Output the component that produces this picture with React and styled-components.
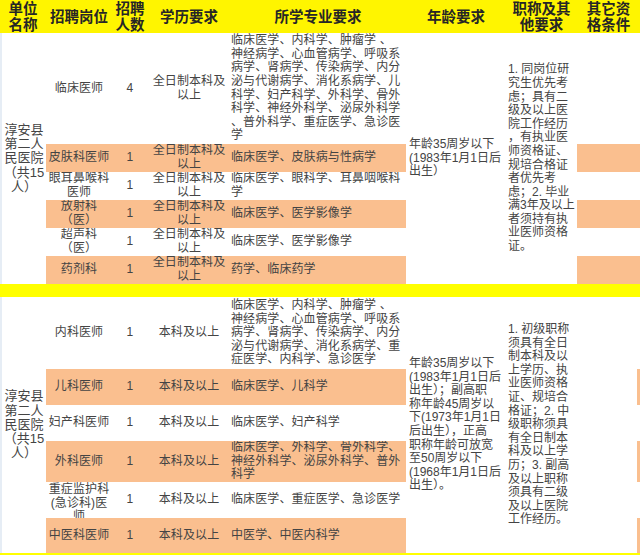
import React from 'react';
import styled, { createGlobalStyle } from 'styled-components';

const COLUMNS = '46px 66px 36px 82px 176px 100px 71px 63px';
const ORANGE = '#fabf8f';
const YELLOW = '#ffff00';

const GlobalStyle = createGlobalStyle`
    body {
        margin: 0;
        background: #ffffff;
    }
`;

const Sheet = styled.div`
    width: 640px;
    display: flex;
    flex-direction: column;
    font-family: "Liberation Sans", "Noto Sans CJK SC", sans-serif;
    color: #444444;
`;

const HeaderRow = styled.div`
    display: grid;
    grid-template-columns: ${COLUMNS};
    height: 33px;
    background: #fff500;
`;

const HeadCell = styled.div`
    display: flex;
    align-items: center;
    justify-content: center;
    text-align: center;
    font-size: 14.5px;
    line-height: 16px;
    font-weight: 700;
    color: #262626;
    white-space: nowrap;
`;

const Section = styled.div`
    display: grid;
    grid-template-columns: ${COLUMNS};
    grid-template-rows: ${(p) => p.$rows};
`;

const Cell = styled.div`
    grid-column: ${(p) => p.$col};
    display: flex;
    align-items: ${(p) => (p.$top ? 'flex-start' : 'center')};
    justify-content: ${(p) => (p.$left ? 'flex-start' : 'center')};
    text-align: ${(p) => (p.$left ? 'left' : 'center')};
    padding-left: ${(p) => (p.$left ? '1px' : '0')};
    padding-top: ${(p) => (p.$top ? '1px' : '0')};
    background: ${(p) => (p.$orange ? ORANGE : '#ffffff')};
    box-shadow: ${(p) => (p.$sliver ? `inset -3px 0 0 ${ORANGE}` : 'none')};
    font-size: 12px;
    line-height: 13.6px;
    letter-spacing: 0.1px;
    white-space: nowrap;
    overflow: hidden;
`;

const MergedCell = styled.div`
    grid-column: ${(p) => p.$col};
    grid-row: 1 / -1;
    display: flex;
    align-items: center;
    justify-content: flex-start;
    padding-left: ${(p) => p.$pad || 0}px;
    background: #ffffff;
    font-size: 12px;
    line-height: 13.6px;
    white-space: nowrap;
`;

const UnitCell = styled.div`
    grid-column: 1;
    grid-row: 1 / -1;
    display: flex;
    align-items: center;
    justify-content: center;
    text-align: center;
    border-left: 2px solid #e6edf5;
    background: #ffffff;
    font-size: 13px;
    line-height: 14.3px;
    white-space: nowrap;
`;

const Divider = styled.div`
    height: 13px;
    background: ${YELLOW};
`;

const BottomRule = styled.div`
    height: 2px;
    background: ${YELLOW};
`;

const Lines = ({ lines }) => (
    <span>
        {lines.map((line, i) => (
            <React.Fragment key={i}>
                {i > 0 && <br />}
                {line}
            </React.Fragment>
        ))}
    </span>
);

const headers = [
    ['单位', '名称'],
    ['招聘岗位'],
    ['招聘', '人数'],
    ['学历要求'],
    ['所学专业要求'],
    ['年龄要求'],
    ['职称及其', '他要求'],
    ['其它资', '格条件'],
];

const unitName = ['淳安县', '第二人', '民医院', '（共15', '人）'];

const firstRows = [
    {
        h: 111,
        post: ['临床医师'],
        n: '4',
        edu: ['全日制本科及', '以上'],
        major: [
            '临床医学、内科学、肿瘤学  、',
            '神经病学、心血管病学、呼吸系',
            '病学、肾病学、传染病学、内分',
            '泌与代谢病学、消化系病学、儿',
            '科学、妇产科学、外科学、骨外',
            '科学、神经外科学、泌尿外科学',
            '、普外科学、重症医学、急诊医',
            '学',
        ],
    },
    { h: 28, post: ['皮肤科医师'], n: '1', edu: ['全日制本科及', '以上'], major: ['临床医学、皮肤病与性病学'], orange: true },
    { h: 28, post: ['眼耳鼻喉科', '医师'], n: '1', edu: ['全日制本科及', '以上'], major: ['临床医学、眼科学、耳鼻咽喉科', '学'] },
    { h: 28, post: ['放射科', '（医）'], n: '1', edu: ['全日制本科及', '以上'], major: ['临床医学、医学影像学'], orange: true },
    { h: 28, post: ['超声科', '（医）'], n: '1', edu: ['全日制本科及', '以上'], major: ['临床医学、医学影像学'] },
    { h: 28, post: ['药剂科'], n: '1', edu: ['全日制本科及', '以上'], major: ['药学、临床药学'], orange: true },
];

const secondRows = [
    {
        h: 72,
        post: ['内科医师'],
        n: '1',
        edu: ['本科及以上'],
        major: [
            '临床医学、内科学、肿瘤学  、',
            '神经病学、心血管病学、呼吸系',
            '病学、肾病学、传染病学、内分',
            '泌与代谢病学、消化系病学、重',
            '症医学、内科学、急诊医学',
        ],
    },
    { h: 36, post: ['儿科医师'], n: '1', edu: ['本科及以上'], major: ['临床医学、儿科学'], orange: true },
    { h: 36, post: ['妇产科医师'], n: '1', edu: ['本科及以上'], major: ['临床医学、妇产科学'] },
    {
        h: 41,
        post: [' 外科医师'],
        n: '1',
        edu: ['本科及以上'],
        major: ['临床医学、外科学、骨外科学、', '神经外科学、泌尿外科学、普外', '科学'],
        orange: true,
    },
    { h: 36, post: ['重症监护科', '(急诊科)医', '师'], n: '1', edu: ['本科及以上'], major: ['临床医学、重症医学、急诊医学'], top: true },
    { h: 35, post: ['中医科医师'], n: '1', edu: ['本科及以上'], major: ['中医学、中医内科学'], orange: true },
];

const firstAge = ['年龄35周岁以下', '(1983年1月1日后', '出生）'];

const firstTitle = [
    '1. 同岗位研',
    '究生优先考',
    '虑；具有二',
    '级及以上医',
    '院工作经历',
    '，有执业医',
    '师资格证、',
    '规培合格证',
    '者优先考',
    '虑；2. 毕业',
    '满3年及以上',
    '者须持有执',
    '业医师资格',
    '证。',
];

const secondAge = [
    '年龄35周岁以下',
    '(1983年1月1日后',
    '出生）；副高职',
    '称年龄45周岁以',
    '下(1973年1月1日',
    '后出生），正高',
    '职称年龄可放宽',
    '至50周岁以下',
    '(1968年1月1日后',
    '出生）。',
];

const secondTitle = [
    '1. 初级职称',
    '须具有全日',
    '制本科及以',
    '上学历、执',
    '业医师资格',
    '证、规培合',
    '格证；2. 中',
    '级职称须具',
    '有全日制本',
    '科及以上学',
    '历；3. 副高',
    '及以上职称',
    '须具有二级',
    '及以上医院',
    '工作经历。',
];

const HospitalSection = ({ rows, age, title, wideExtra }) => (
    <Section $rows={rows.map((r) => `${r.h}px`).join(' ')}>
        <UnitCell>
            <Lines lines={unitName} />
        </UnitCell>
        <MergedCell $col={6} $pad={3}>
            <Lines lines={age} />
        </MergedCell>
        <MergedCell $col={7} $pad={2}>
            <Lines lines={title} />
        </MergedCell>
        {rows.map((row, i) => (
            <React.Fragment key={i}>
                <Cell $col={2} $orange={row.orange} $top={row.top}>
                    <Lines lines={row.post} />
                </Cell>
                <Cell $col={3} $orange={row.orange}>{row.n}</Cell>
                <Cell $col={4} $orange={row.orange}>
                    <Lines lines={row.edu} />
                </Cell>
                <Cell $col={5} $orange={row.orange} $left>
                    <Lines lines={row.major} />
                </Cell>
                {wideExtra ? (
                    <Cell $col={8} $orange={row.orange} />
                ) : (
                    <Cell $col={8} $sliver={row.orange} />
                )}
            </React.Fragment>
        ))}
    </Section>
);

function App() {
    return (
        <>
            <GlobalStyle />
            <Sheet>
                <HeaderRow>
                    {headers.map((h, i) => (
                        <HeadCell key={i}>
                            <Lines lines={h} />
                        </HeadCell>
                    ))}
                </HeaderRow>
                <HospitalSection rows={firstRows} age={firstAge} title={firstTitle} wideExtra />
                <Divider />
                <HospitalSection rows={secondRows} age={secondAge} title={secondTitle} />
                <BottomRule />
            </Sheet>
        </>
    );
}

export default App;
